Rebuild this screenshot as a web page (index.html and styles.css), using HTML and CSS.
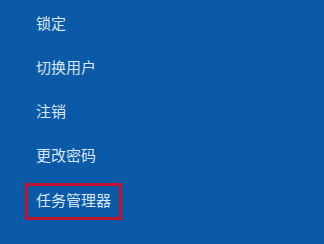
FILE: index.html
```html
<!DOCTYPE html>
<html lang="zh-CN">
<head>
<meta charset="utf-8">
<link rel="stylesheet" href="styles.css">
</head>
<body>
<ul class="menu">
  <li class="item">锁定</li>
  <li class="item">切换用户</li>
  <li class="item">注销</li>
  <li class="item">更改密码</li>
  <li class="item"><span class="highlight">任务管理器</span></li>
</ul>
</body>
</html>
```
FILE: styles.css
```css
html, body {
  margin: 0;
  padding: 0;
  width: 324px;
  height: 244px;
  overflow: hidden;
  background: #0b5aa7;
}
.menu {
  list-style: none;
  margin: 0;
  padding: 13px 0 0 36px;
  display: flex;
  flex-direction: column;
  gap: 24px;
  font-family: "Noto Sans CJK SC", "Noto Sans", sans-serif;
  font-size: 15px;
  line-height: 20px;
  color: #d9e6f3;
}
.item {
  height: 20px;
}
.highlight {
  display: inline-block;
  margin-left: -11px;
  margin-top: -6px;
  padding: 4px 8px 7px 8px;
  border: 3px solid #c0132f;
}
```
